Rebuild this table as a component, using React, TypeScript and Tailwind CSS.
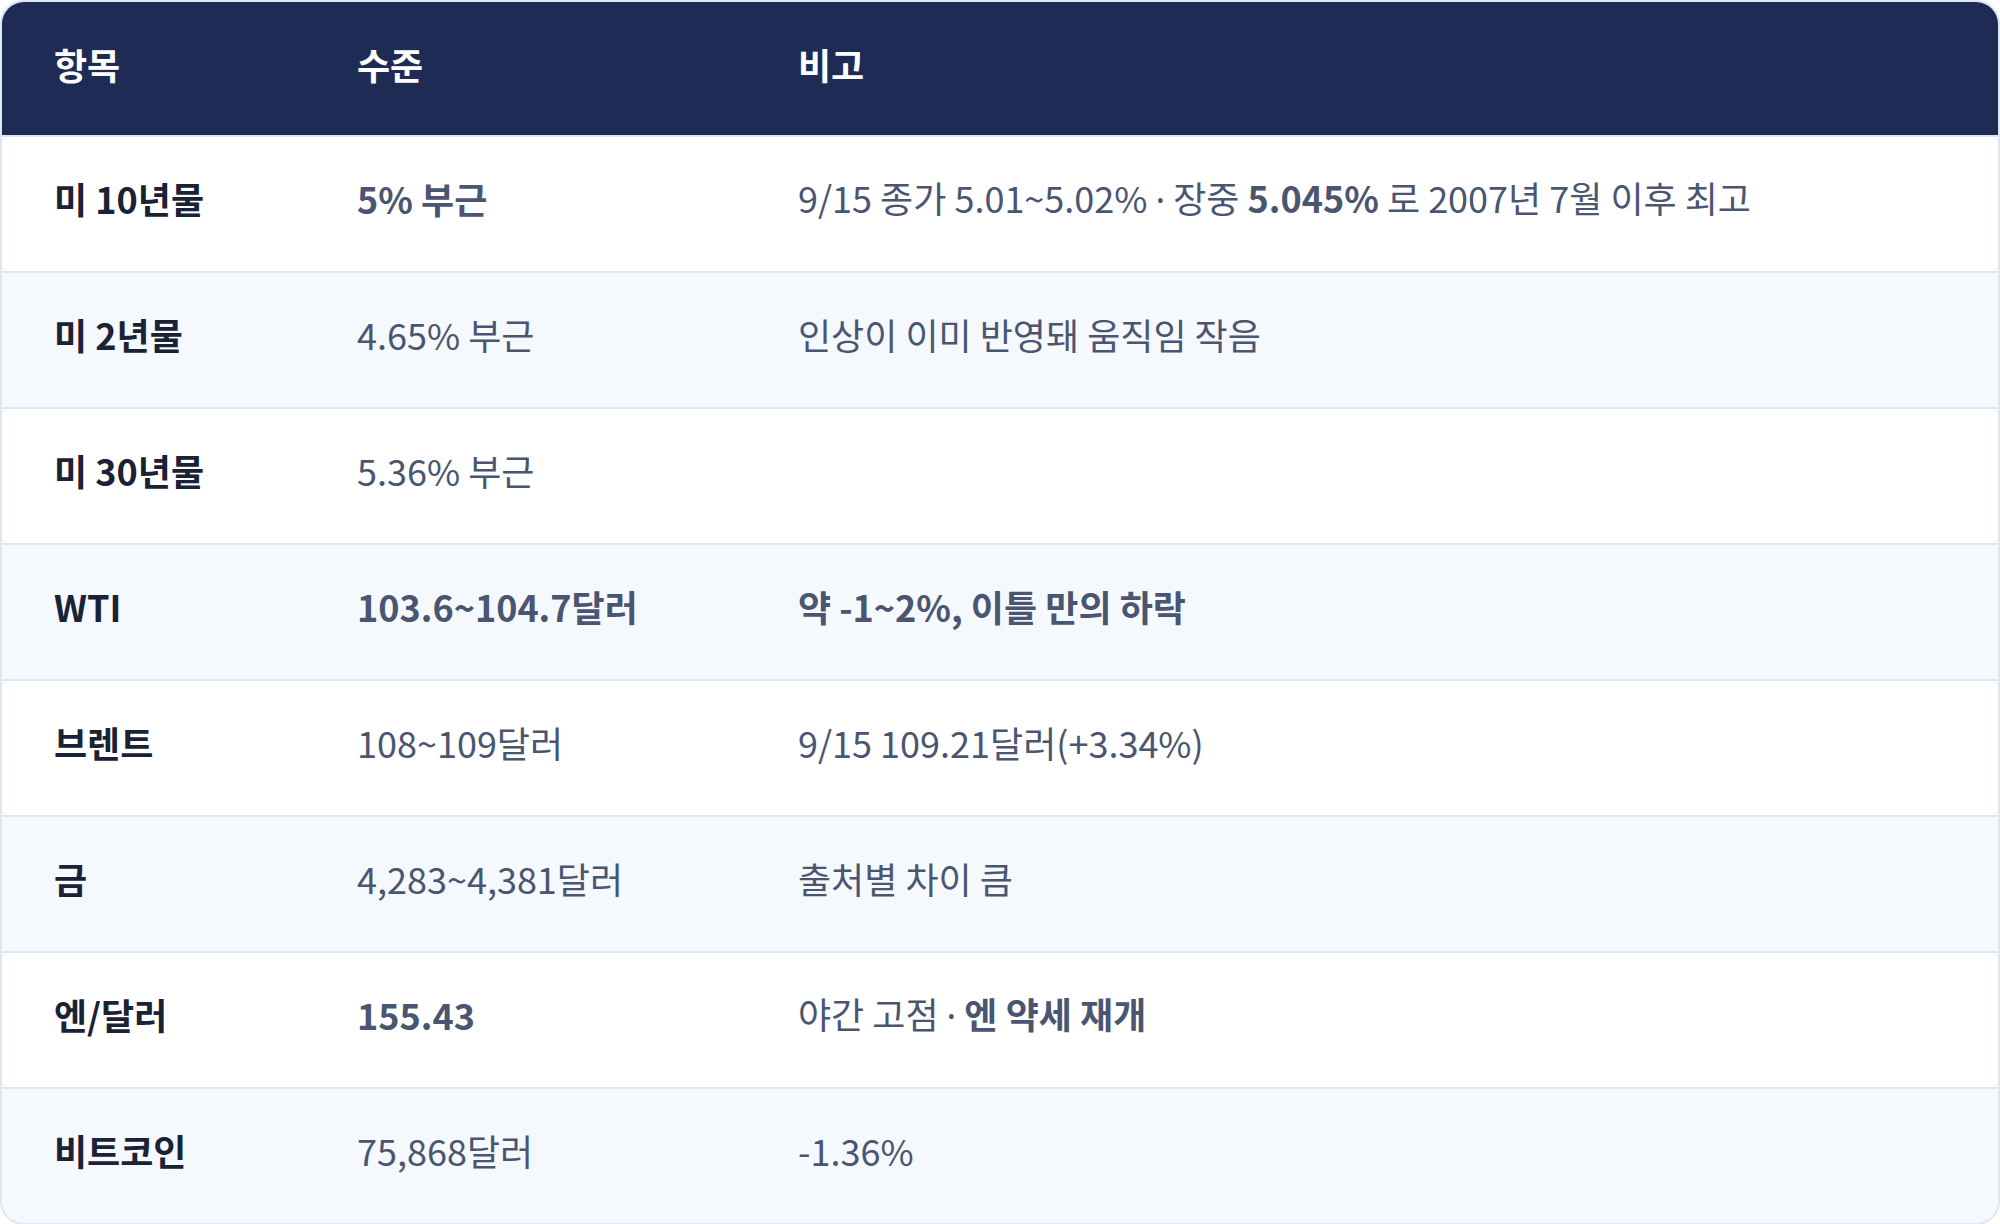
import React from "react";

type Row = {
  item: string;
  level: React.ReactNode;
  levelBold?: boolean;
  note: React.ReactNode;
};

const Dot = () => <span style={{ fontFamily: '"Noto Sans", sans-serif' }}>·</span>;

const rows: Row[] = [
  {
    item: "미 10년물",
    level: "5% 부근",
    levelBold: true,
    note: (
      <>
        9/15 종가 5.01~5.02% <Dot /> 장중 <span className="font-bold">5.045%</span> 로 2007년 7월 이후 최고
      </>
    ),
  },
  { item: "미 2년물", level: "4.65% 부근", note: "인상이 이미 반영돼 움직임 작음" },
  { item: "미 30년물", level: "5.36% 부근", note: "" },
  {
    item: "WTI",
    level: "103.6~104.7달러",
    levelBold: true,
    note: <span className="font-bold">약 -1~2%, 이틀 만의 하락</span>,
  },
  { item: "브렌트", level: "108~109달러", note: "9/15 109.21달러(+3.34%)" },
  { item: "금", level: "4,283~4,381달러", note: "출처별 차이 큼" },
  {
    item: "엔/달러",
    level: "155.43",
    levelBold: true,
    note: (
      <>
        야간 고점 <Dot /> <span className="font-bold">엔 약세 재개</span>
      </>
    ),
  },
  { item: "비트코인", level: "75,868달러", note: "-1.36%" },
];

export default function App() {
  return (
    <div
      className="w-[2000px] h-[1224px] bg-white"
      style={{ fontFamily: '"Noto Sans CJK KR", "Noto Sans", sans-serif' }}
    >
      <div className="w-[2000px] border-2 border-[#dfe5f2] rounded-[24px] overflow-hidden">
        <div className="grid grid-cols-[303px_441px_1fr] h-[133px] pb-[10px] items-center bg-[#1e2c55] text-white font-bold text-[36px]">
          <div className="pl-[52px]">항목</div>
          <div className="pl-[52px]">수준</div>
          <div className="pl-[52px]">비고</div>
        </div>
        {rows.map((r, i) => (
          <div
            key={i}
            className={`grid grid-cols-[303px_441px_1fr] h-[136px] pb-[12px] items-center border-t-2 border-[#dfe5f2] text-[36px] ${
              i % 2 === 1 ? "bg-[#f5f8fd]" : "bg-white"
            }`}
          >
            <div className="pl-[52px] font-bold text-[#1a2235]">{r.item}</div>
            <div className={`pl-[52px] text-[#4a5572] ${r.levelBold ? "font-bold" : ""}`}>{r.level}</div>
            <div className="pl-[52px] text-[#4a5572]">{r.note}</div>
          </div>
        ))}
      </div>
    </div>
  );
}
